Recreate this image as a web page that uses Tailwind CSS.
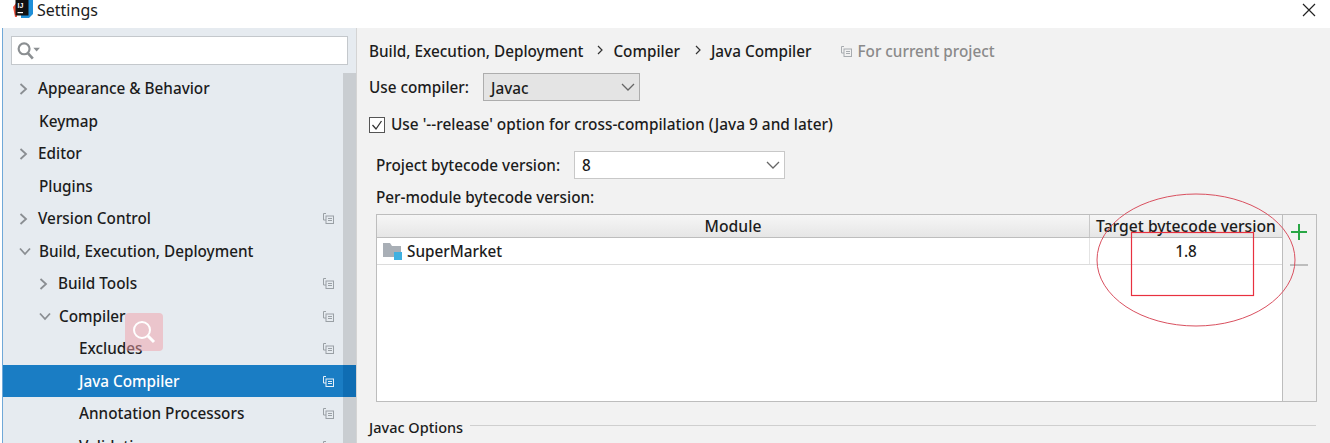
<!DOCTYPE html>
<html lang="en">
<head>
    <meta charset="UTF-8">
    <title>Settings</title>
    <script src="https://cdn.jsdelivr.net/npm/@tailwindcss/browser@4"></script>
</head>
<body class="bg-white">
    <div class="relative w-[1330px] h-[443px] overflow-hidden font-['Noto_Sans',sans-serif] text-[15.3px] font-medium text-[#1c1c1c]">
        <!-- title bar -->
        <div class="h-[28px] flex items-center pl-[13px] pr-[14px] bg-white">
            <svg class="w-[20px] h-[20px] mb-[8px]" viewBox="0 0 20 20">
                <path d="M0 7 L4 2 V17 H2 Z" fill="#f0533c"/>
                <path d="M14 0 H20 V14 L16 18 H8 V14 Z" fill="#1f8fd8"/>
                <rect x="2.5" y="0" width="13" height="15.5" fill="#111"/>
                <text x="4.5" y="8" font-size="7" font-weight="700" fill="#fff" font-family="Liberation Sans">IJ</text>
                <rect x="4.5" y="12" width="5.5" height="1.2" fill="#fff"/>
            </svg>
            <span class="ml-[4px] mb-[9px] text-[16px] font-normal">Settings</span>
            <svg class="ml-auto mb-[8px] w-[14px] h-[14px]" viewBox="0 0 14 14" fill="none" stroke="#222" stroke-width="1.2"><path d="M1 1 L13 13 M13 1 L1 13"/></svg>
        </div>
        <div class="flex h-[415px]">
            <div class="w-[3px] shrink-0 bg-white border-r border-[#6fa8d8]"></div>
            <!-- sidebar -->
            <div class="relative w-[353px] shrink-0 bg-[#e6ebf0] pt-[8px] overflow-hidden">
                <div class="ml-[8px] w-[337px] h-[29px] bg-white border border-[#c4c8cc] flex items-center pl-[5px]">
                    <svg class="w-[24px] h-[20px]" viewBox="0 0 22 18" fill="none">
                        <circle cx="6.5" cy="7" r="5" stroke="#8b8f92" stroke-width="2"/>
                        <path d="M10 11 L14.5 16" stroke="#8b8f92" stroke-width="2.4"/>
                        <path d="M15 6 H21 L18 9.5 Z" fill="#8b8f92"/>
                    </svg>
                </div>
                <div class="absolute right-0 top-[45px] bottom-0 w-[13px] bg-[#c9cdd1]"></div>
                <div class="relative mt-[7.3px]">
                    <div class="h-[32.5px] flex items-center pl-[16px]">
                        <svg class="w-[9px] h-[12px]" viewBox="0 0 9 12" fill="none" stroke="#8a8e92" stroke-width="1.8"><path d="M1.5 1 L7 6 L1.5 11"/></svg>
                        <span class="ml-[10px]">Appearance &amp; Behavior</span>
                    </div>
                    <div class="h-[32.5px] flex items-center pl-[36px]">Keymap</div>
                    <div class="h-[32.5px] flex items-center pl-[16px]">
                        <svg class="w-[9px] h-[12px]" viewBox="0 0 9 12" fill="none" stroke="#8a8e92" stroke-width="1.8"><path d="M1.5 1 L7 6 L1.5 11"/></svg>
                        <span class="ml-[10px]">Editor</span>
                    </div>
                    <div class="h-[32.5px] flex items-center pl-[36px]">Plugins</div>
                    <div class="h-[32.5px] flex items-center pl-[16px]">
                        <svg class="w-[9px] h-[12px]" viewBox="0 0 9 12" fill="none" stroke="#8a8e92" stroke-width="1.8"><path d="M1.5 1 L7 6 L1.5 11"/></svg>
                        <span class="ml-[10px]">Version Control</span>
                        <svg class="ml-auto mr-[22px] w-[11px] h-[11px]" viewBox="0 0 11 11" fill="none"><path d="M3 .5 H.5 V7 H3" stroke="#9aa0a5"/><rect x="3" y="3" width="7.5" height="7.5" stroke="#9aa0a5"/><path d="M5 5.5 H9 M5 7.5 H9" stroke="#9aa0a5"/></svg>
                    </div>
                    <div class="h-[32.5px] flex items-center pl-[16px]">
                        <svg class="w-[12px] h-[9px]" viewBox="0 0 12 9" fill="none" stroke="#8a8e92" stroke-width="1.8"><path d="M1 1.5 L6 7 L11 1.5"/></svg>
                        <span class="ml-[8px]">Build, Execution, Deployment</span>
                    </div>
                    <div class="h-[32.5px] flex items-center pl-[36px]">
                        <svg class="w-[9px] h-[12px]" viewBox="0 0 9 12" fill="none" stroke="#8a8e92" stroke-width="1.8"><path d="M1.5 1 L7 6 L1.5 11"/></svg>
                        <span class="ml-[10px]">Build Tools</span>
                        <svg class="ml-auto mr-[22px] w-[11px] h-[11px]" viewBox="0 0 11 11" fill="none"><path d="M3 .5 H.5 V7 H3" stroke="#9aa0a5"/><rect x="3" y="3" width="7.5" height="7.5" stroke="#9aa0a5"/><path d="M5 5.5 H9 M5 7.5 H9" stroke="#9aa0a5"/></svg>
                    </div>
                    <div class="h-[32.5px] flex items-center pl-[36px]">
                        <svg class="w-[12px] h-[9px]" viewBox="0 0 12 9" fill="none" stroke="#8a8e92" stroke-width="1.8"><path d="M1 1.5 L6 7 L11 1.5"/></svg>
                        <span class="ml-[8px]">Compiler</span>
                        <svg class="ml-auto mr-[22px] w-[11px] h-[11px]" viewBox="0 0 11 11" fill="none"><path d="M3 .5 H.5 V7 H3" stroke="#9aa0a5"/><rect x="3" y="3" width="7.5" height="7.5" stroke="#9aa0a5"/><path d="M5 5.5 H9 M5 7.5 H9" stroke="#9aa0a5"/></svg>
                    </div>
                    <div class="h-[32.5px] flex items-center pl-[76px]">
                        Excludes
                        <svg class="ml-auto mr-[22px] w-[11px] h-[11px]" viewBox="0 0 11 11" fill="none"><path d="M3 .5 H.5 V7 H3" stroke="#9aa0a5"/><rect x="3" y="3" width="7.5" height="7.5" stroke="#9aa0a5"/><path d="M5 5.5 H9 M5 7.5 H9" stroke="#9aa0a5"/></svg>
                    </div>
                    <div class="relative h-[32.5px] flex items-center pl-[76px] bg-[#1a7dc4] text-white">
                        Java Compiler
                        <svg class="ml-auto mr-[22px] w-[11px] h-[11px]" viewBox="0 0 11 11" fill="none"><path d="M3 .5 H.5 V7 H3" stroke="#e6f0f8"/><rect x="3" y="3" width="7.5" height="7.5" stroke="#e6f0f8"/><path d="M5 5.5 H9 M5 7.5 H9" stroke="#e6f0f8"/></svg>
                        <div class="absolute right-0 top-0 bottom-0 w-[13px] bg-[#0f6db3]"></div>
                    </div>
                    <div class="h-[32.5px] flex items-center pl-[76px]">
                        Annotation Processors
                        <svg class="ml-auto mr-[22px] w-[11px] h-[11px]" viewBox="0 0 11 11" fill="none"><path d="M3 .5 H.5 V7 H3" stroke="#9aa0a5"/><rect x="3" y="3" width="7.5" height="7.5" stroke="#9aa0a5"/><path d="M5 5.5 H9 M5 7.5 H9" stroke="#9aa0a5"/></svg>
                    </div>
                    <div class="h-[32.5px] flex items-center pl-[76px]">
                        Validation
                        <svg class="ml-auto mr-[22px] w-[11px] h-[11px]" viewBox="0 0 11 11" fill="none"><path d="M3 .5 H.5 V7 H3" stroke="#9aa0a5"/><rect x="3" y="3" width="7.5" height="7.5" stroke="#9aa0a5"/><path d="M5 5.5 H9 M5 7.5 H9" stroke="#9aa0a5"/></svg>
                    </div>
                </div>
            </div>
            <!-- main pane -->
            <div class="flex-1 bg-[#f2f2f2] border-l border-[#d4d4d4] pl-[12px] pt-[12px]">
                <div class="h-[22px] flex items-center">
                    <span>Build, Execution, Deployment</span>
                    <svg class="ml-[14px] w-[6px] h-[10px] mb-[2px]" viewBox="0 0 6 10" fill="none" stroke="#333" stroke-width="1.2"><path d="M1 1 L5 5 L1 9"/></svg>
                    <span class="ml-[10px]">Compiler</span>
                    <svg class="ml-[15px] w-[6px] h-[10px] mb-[2px]" viewBox="0 0 6 10" fill="none" stroke="#333" stroke-width="1.2"><path d="M1 1 L5 5 L1 9"/></svg>
                    <span class="ml-[10px]">Java Compiler</span>
                    <svg class="ml-[30px] w-[11px] h-[11px]" viewBox="0 0 11 11" fill="none"><path d="M3 .5 H.5 V7 H3" stroke="#a8acb0"/><rect x="3" y="3" width="7.5" height="7.5" stroke="#a8acb0"/><path d="M5 5.5 H9 M5 7.5 H9" stroke="#a8acb0"/></svg>
                    <span class="ml-[5px] text-[#8a8a8a]">For current project</span>
                </div>
                <div class="mt-[11px] h-[28px] flex items-center">
                    <span>Use compiler:</span>
                    <div class="ml-[14px] w-[157px] h-[28px] bg-[#e4e4e4] border border-[#adadad] flex items-center pl-[7px] pr-[4px] pt-[2px]">
                        Javac
                        <svg class="ml-auto mb-[2px] w-[14px] h-[9px]" viewBox="0 0 14 9" fill="none" stroke="#666" stroke-width="1.3"><path d="M1 1 L7 7 L13 1"/></svg>
                    </div>
                </div>
                <div class="mt-[11px] h-[26px] flex items-center">
                    <div class="w-[16px] h-[16px] bg-white border border-[#555] flex items-center justify-center">
                        <svg class="w-[12px] h-[12px]" viewBox="0 0 12 12" fill="none" stroke="#333" stroke-width="1.3"><path d="M1.5 6 L5 10 L10.5 2"/></svg>
                    </div>
                    <span class="ml-[6px] text-[15.4px]">Use '--release' option for cross-compilation (Java 9 and later)</span>
                </div>
                <div class="mt-[13px] ml-[7px] h-[28px] flex items-center">
                    <span>Project bytecode version:</span>
                    <div class="ml-[14px] w-[211px] h-[28px] bg-white border border-[#c8c8c8] flex items-center pl-[7px] pr-[4px]">
                        8
                        <svg class="ml-auto w-[14px] h-[9px]" viewBox="0 0 14 9" fill="none" stroke="#666" stroke-width="1.3"><path d="M1 1 L7 7 L13 1"/></svg>
                    </div>
                </div>
                <div class="mt-[7px] ml-[7px] h-[22px] flex items-center">Per-module bytecode version:</div>
                <!-- module table -->
                <div class="mt-[6px] ml-[7px] w-[941px] h-[188px] flex border border-[#bdbdbd]">
                    <div class="w-[906px] bg-white border-r border-[#bdbdbd]">
                        <div class="h-[23px] flex border-b border-[#bdbdbd] bg-gradient-to-b from-[#f6f6f6] to-[#e6e6e6] text-[15.7px]">
                            <div class="w-[713px] flex items-center justify-center border-r border-[#c8c8c8] pt-px">Module</div>
                            <div class="flex-1 flex items-center justify-center whitespace-nowrap pt-px">Target bytecode version</div>
                        </div>
                        <div class="h-[27px] flex border-b border-[#dcdcdc]">
                            <div class="w-[713px] flex items-center pl-[6px] border-r border-[#e4e4e4]">
                                <svg class="w-[20px] h-[18px]" viewBox="0 0 20 18">
                                    <path d="M0 1 H7 L9 4 H18 V15 H0 Z" fill="#a9afb6"/>
                                    <rect x="11" y="10" width="8" height="8" fill="#3fb0e0"/>
                                </svg>
                                <span class="ml-[4px]">SuperMarket</span>
                            </div>
                            <div class="flex-1 flex items-center justify-center">1.8</div>
                        </div>
                    </div>
                    <div class="flex-1 flex flex-col items-center pt-[9px] pr-[2px]">
                        <svg class="w-[16px] h-[16px]" viewBox="0 0 16 16" stroke="#29a745" stroke-width="2"><path d="M8 0 V16 M0 8 H16"/></svg>
                        <div class="mt-[24px] w-[18px] h-[2px] bg-[#bdbdbd]"></div>
                    </div>
                </div>
                <div class="mt-[15px] flex items-center">
                    <span class="text-[14.5px]">Javac Options</span>
                    <div class="ml-[7px] mb-[5px] w-[846px] h-px bg-[#cfcfcf]"></div>
                </div>
            </div>
        </div>
        <!-- hand-drawn annotations and floating search badge -->
        <svg class="absolute left-0 top-0 pointer-events-none" width="1330" height="443" fill="none">
            <ellipse cx="1196" cy="260" rx="99" ry="66" stroke="#d9505f"/>
            <rect x="1131.5" y="232.5" width="122" height="63" stroke="#e8303f" stroke-width="1.2"/>
        </svg>
        <div class="absolute left-[125px] top-[313px] w-[38px] h-[38px] rounded-[4px] bg-[#f0a0a8]/50 flex items-center justify-center">
            <svg class="w-[26px] h-[26px]" viewBox="0 0 26 26" fill="none" stroke="#fff" stroke-width="2"><circle cx="11" cy="11" r="8"/><path d="M17 17 L23 23" stroke-width="3"/></svg>
        </div>
    </div>
</body>
</html>
